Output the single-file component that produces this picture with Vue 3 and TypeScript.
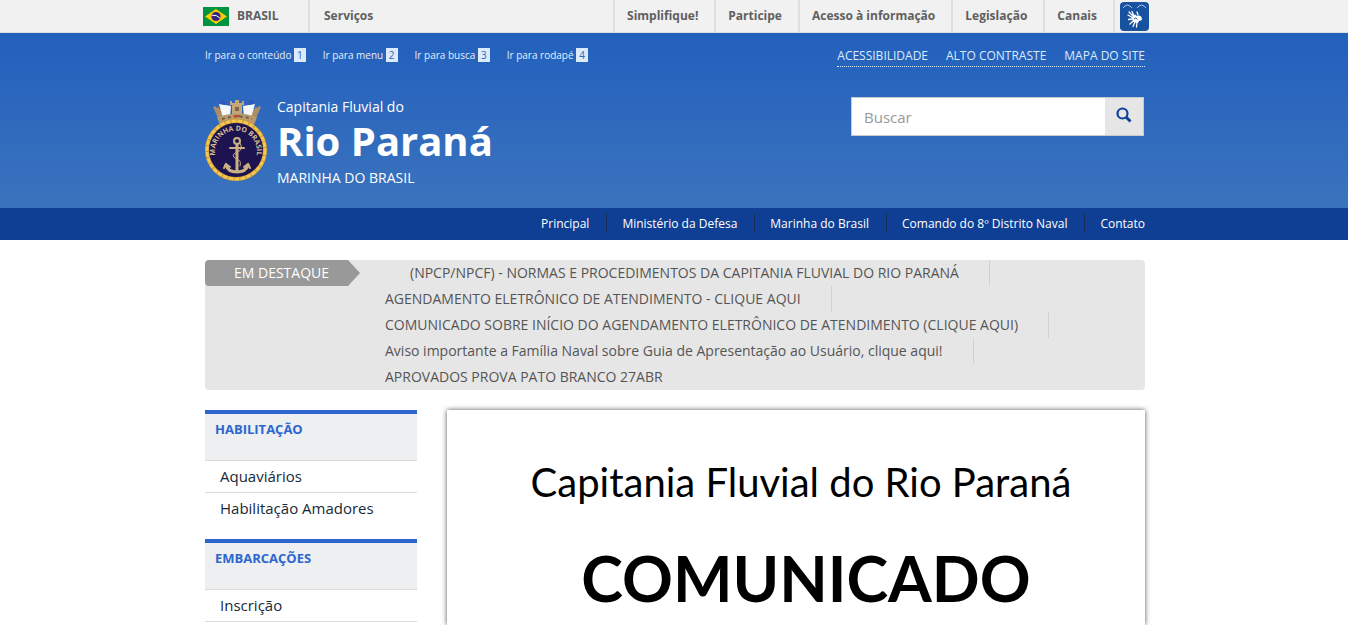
<script setup lang="ts">
import { ref } from 'vue'

interface MenuGroup {
  title: string
  items: string[]
}

const barLinks: string[] = ['Simplifique!', 'Participe', 'Acesso à informação', 'Legislação', 'Canais']
const skipLinks: string[] = ['Ir para o conteúdo', 'Ir para menu', 'Ir para busca', 'Ir para rodapé']
const tools: string[] = ['ACESSIBILIDADE', 'ALTO CONTRASTE', 'MAPA DO SITE']
const sections: string[] = ['Principal', 'Ministério da Defesa', 'Marinha do Brasil', 'Comando do 8º Distrito Naval', 'Contato']
const highlights: string[] = [
  '(NPCP/NPCF) - NORMAS E PROCEDIMENTOS DA CAPITANIA FLUVIAL DO RIO PARANÁ',
  'AGENDAMENTO ELETRÔNICO DE ATENDIMENTO - CLIQUE AQUI',
  'COMUNICADO SOBRE INÍCIO DO AGENDAMENTO ELETRÔNICO DE ATENDIMENTO (CLIQUE AQUI)',
  'Aviso importante a Família Naval sobre Guia de Apresentação ao Usuário, clique aqui!',
  'APROVADOS PROVA PATO BRANCO 27ABR',
]
const groups: MenuGroup[] = [
  { title: 'HABILITAÇÃO', items: ['Aquaviários', 'Habilitação Amadores'] },
  { title: 'EMBARCAÇÕES', items: ['Inscrição'] },
]
const query = ref('')
</script>

<template>
  <div class="page">
    <div class="gov-bar">
      <div class="wrap gov-inner">
        <a href="#" class="brasil">
          <svg class="flag" viewBox="0 0 26 19" aria-hidden="true">
            <rect width="26" height="19" fill="#009440" />
            <path d="M13 2 L24 9.500 L13 17 L2 9.500 Z" fill="#ffcb00" />
            <circle cx="13" cy="9.500" r="4.600" fill="#302681" />
            <path d="M8.800 8.200 Q13.500 7.500 17.200 11.200" stroke="#fff" stroke-width="1" fill="none" />
          </svg>
          <span>BRASIL</span>
        </a>
        <a href="#" class="services">Serviços</a>
        <nav class="gov-links">
          <a v-for="l in barLinks" :key="l" href="#">{{ l }}</a>
        </nav>
        <button class="libras" type="button" aria-label="Libras">
          <svg viewBox="0 0 29 29" aria-hidden="true">
            <path d="M3 6 L5 4 Q7 2 10 4 L12 6 M17 6 L19 4 Q22 2 24 4 L26 6" stroke="#a9c4e8" stroke-width="1" fill="none" />
            <path d="M13 16 L8 13 M13 14 L9 10 M14 14 L12 9.500 M12 17 L8.500 17.500 M13 19 L10 22 M15 20 L13 24.500 M17 20 L16.500 25 M18 13 L17 10" stroke="#fff" stroke-width="1.300" stroke-linecap="round" fill="none" />
            <path d="M12 15 L15 12.500 L17 14 Q20 12.500 21.500 15 L22 18 L19 19 L18 21 L13 20 Z" fill="#fff" />
            <path d="M14 17 Q16 14.500 17.500 17.500" stroke="#16529f" stroke-width="1" fill="none" />
          </svg>
        </button>
      </div>
    </div>

    <header class="header">
      <div class="wrap">
        <div class="header-top">
          <ul class="skips">
            <li v-for="(s, i) in skipLinks" :key="s">
              <a href="#">{{ s }} <span>{{ i + 1 }}</span></a>
            </li>
          </ul>
          <nav class="tools">
            <a v-for="t in tools" :key="t" href="#">{{ t }}</a>
          </nav>
        </div>
        <div class="header-main">
          <a href="#" class="brand">
            <svg class="crest" viewBox="0 0 64 84" aria-hidden="true">
              <path d="M13 20 L8 9 L11 8 L11 10 L14 9 L14 11 L17 11 L17 22 M51 20 L56 9 L53 8 L53 10 L50 9 L50 11 L47 11 L47 22" fill="#ad8d65" />
              <path d="M27 20 V7 H25 V3 H27 V5 H30 V2 H34 V5 H37 V3 H39 V7 H37 V20 Z" fill="#c5a679" />
              <path d="M30 13 V9 H34 V13 Z" fill="#7d6546" />
              <path d="M14 6 L26 8 L25 19 L18 20 Z M50 6 L38 8 L39 19 L46 20 Z" fill="#f5f7fa" />
              <path d="M15 2 L20 3 L20 7 L16 6 Z M44 3 L49 2 L48 6 L44 7 Z" fill="#3554c4" />
              <path d="M12 19 Q32 12 52 19 L49 27 Q32 19 15 27 Z" fill="#b99a6d" />
              <path d="M17 21 Q32 16 47 21" stroke="#765d43" stroke-width="2" fill="none" stroke-dasharray="3 3" />
              <path d="M29 18 H35" stroke="#bd4b37" stroke-width="2" />
              <circle cx="31" cy="52" r="29" fill="#1d1351" stroke="#c9952e" stroke-width="4" />
              <circle cx="31" cy="52" r="29" fill="none" stroke="#f2c650" stroke-width="3" stroke-dasharray="5 1" />
              <path id="crest-arc" d="M11 60 A21 21 0 1 1 51 60" fill="none" />
              <text class="crest-text"><textPath href="#crest-arc" startOffset="50%" text-anchor="middle">MARINHA DO BRASIL</textPath></text>
              <g stroke="#cbb184" fill="none" stroke-linecap="round">
                <circle cx="32" cy="43" r="3" stroke-width="2" />
                <path d="M32 47 V73" stroke-width="3" />
                <path d="M25 50 H39" stroke-width="2" />
                <path d="M21 67 Q23 74 32 74 Q41 74 43 67" stroke-width="3" />
                <path d="M19 70 L21 66 L25 69 M39 69 L43 66 L45 70" stroke-width="2" />
                <path d="M35 45 Q39 52 32 54 Q25 57 31 61 Q37 62 35 68" stroke-width="1" />
              </g>
            </svg>
            <span class="brand-text">
              <span class="small">Capitania Fluvial do</span>
              <strong>Rio Paraná</strong>
              <span class="small">MARINHA DO BRASIL</span>
            </span>
          </a>
          <form class="search" role="search" @submit.prevent>
            <input v-model="query" type="text" placeholder="Buscar" aria-label="Buscar" />
            <button type="submit" aria-label="Pesquisar">
              <svg viewBox="0 0 16 16" aria-hidden="true">
                <circle cx="6.500" cy="6.500" r="5" fill="none" stroke="#0f3f97" stroke-width="2.200" />
                <path d="M10 10 L14.500 14.500" stroke="#0f3f97" stroke-width="3" />
              </svg>
            </button>
          </form>
        </div>
      </div>
    </header>

    <div class="section-bar">
      <nav class="wrap sections">
        <a v-for="s in sections" :key="s" href="#">{{ s }}</a>
      </nav>
    </div>

    <div class="wrap body">
      <section class="highlights">
        <h2>EM DESTAQUE</h2>
        <ul>
          <li v-for="h in highlights" :key="h"><a href="#">{{ h }}</a></li>
        </ul>
      </section>
      <div class="columns">
        <aside>
          <nav v-for="g in groups" :key="g.title" class="group">
            <h2>{{ g.title }}</h2>
            <ul>
              <li v-for="i in g.items" :key="i"><a href="#">{{ i }}</a></li>
            </ul>
          </nav>
        </aside>
        <main class="notice">
          <p>Capitania Fluvial do Rio Paraná</p>
          <h1>COMUNICADO</h1>
        </main>
      </div>
    </div>
  </div>
</template>

<style>
body {
  margin: 0;
  background: #fff;
}
</style>

<style scoped>
.page {
  display: flex;
  flex-direction: column;
  min-height: 100vh;
  font-family: "Open Sans", "Noto Sans", sans-serif;
  font-size: 14px;
}
.page * {
  box-sizing: border-box;
}
a {
  color: inherit;
  text-decoration: none;
}
ul, h1, h2, p {
  margin: 0;
  padding: 0;
  list-style: none;
}
.wrap {
  width: 100%;
  max-width: 942px;
  margin: 0 auto;
  padding-left: 2px;
}
.gov-bar {
  background: #f1f1f1;
  border-bottom: 1px solid #dfdfdf;
  color: #606060;
  font-size: 12px;
  font-weight: 700;
  line-height: 32px;
}
.gov-inner {
  display: flex;
  max-width: 950px;
  padding-left: 4px;
  height: 32px;
}
.brasil {
  display: flex;
  align-items: center;
  gap: 8px;
  width: 105px;
}
.flag {
  width: 26px;
  height: 19px;
}
.services {
  padding-left: 14px;
  border-left: 2px solid #dfdfdf;
}
.gov-links {
  display: flex;
  margin-left: auto;
  border-right: 2px solid #dfdfdf;
}
.gov-links a {
  padding: 0 16px 0 12px;
  border-left: 2px solid #dfdfdf;
}
.libras {
  width: 29px;
  height: 29px;
  margin: 2px 0 0 5px;
  padding: 0;
  border: 0;
  border-radius: 4px;
  background: #16529f;
}
.libras svg {
  display: block;
}
.header {
  height: 175px;
  background: linear-gradient(#2260bd, #3b73bd);
  color: #fff;
}
.header-top {
  display: flex;
  justify-content: space-between;
  align-items: flex-start;
  padding-top: 13px;
}
.skips {
  display: flex;
  gap: 17px;
  font-size: 10px;
  line-height: 14px;
  padding-top: 2px;
  color: #e3effd;
}
.skips span {
  display: inline-block;
  padding: 0 3px;
  background: #dceafb;
  color: #3065ba;
}
.tools {
  display: flex;
  gap: 18px;
  border-bottom: 1px dotted #dceafb;
  color: #dceafb;
  font-size: 12px;
  line-height: 20px;
}
.header-main {
  display: flex;
  justify-content: space-between;
  align-items: flex-start;
  padding-top: 30px;
}
.brand {
  display: flex;
  gap: 8px;
}
.crest {
  width: 64px;
  height: 84px;
  margin-top: 1px;
}
.crest-text {
  font-size: 7px;
  font-weight: 700;
  fill: #d4bd92;
}
.brand-text {
  display: flex;
  flex-direction: column;
}
.small {
  font-size: 14px;
  line-height: 20px;
}
.brand strong {
  font-size: 40px;
  line-height: 48px;
  padding-bottom: 3px;
}
.search {
  display: flex;
  width: 293px;
  height: 39px;
  border: 1px solid #c5c9d0;
  margin-right: 1px;
}
.search input {
  flex: 1;
  min-width: 0;
  padding: 0 12px;
  border: 0;
  outline: 0;
  background: #fff;
  color: #444;
  font-family: inherit;
  font-size: 15px;
}
.search input::placeholder {
  color: #999;
}
.search button {
  width: 38px;
  padding: 0;
  border: 0;
  background: #e6e6e6;
}
.search svg {
  width: 16px;
  height: 16px;
}
.section-bar {
  background: #0f3f95;
  color: #fff;
  font-size: 12px;
}
.sections {
  display: flex;
  justify-content: flex-end;
  align-items: center;
  height: 32px;
  padding-bottom: 1px;
}
.sections a {
  padding: 0 17px 0 15px;
  border-right: 1px solid #172d55;
  line-height: 19px;
}
.sections a:last-child {
  padding-right: 0;
  border: 0;
}
.body {
  display: flex;
  flex: 1;
  flex-direction: column;
  padding-top: 20px;
}
.highlights {
  display: flex;
  align-items: flex-start;
  border-radius: 4px;
  background: #e6e6e6;
  color: #555;
  line-height: 26px;
}
.highlights h2 {
  width: 155px;
  padding-left: 29px;
  border-radius: 4px 0 0 4px;
  background: #999;
  clip-path: polygon(0 0, 143px 0, 100% 50%, 143px 100%, 0 100%);
  color: #fff;
  font-size: 14px;
  font-weight: 400;
}
.highlights ul {
  display: flex;
  flex-direction: column;
  align-items: flex-start;
  padding-left: 25px;
}
.highlights li {
  padding-right: 30px;
  border-right: 1px solid #d2d2d2;
}
.highlights li:first-child {
  padding-left: 25px;
}
.highlights li:last-child {
  border: 0;
}
.columns {
  display: flex;
  flex: 1;
  gap: 30px;
  padding-top: 20px;
}
aside {
  width: 212px;
}
.group {
  margin-bottom: 15px;
}
.group:last-child {
  margin-bottom: 0;
}
.group h2 {
  height: 51px;
  padding: 6px 10px;
  border-top: 4px solid #2c66ce;
  border-bottom: 1px solid #dcdcdc;
  background: #edeff1;
  color: #2c66ce;
  font-size: 13px;
  line-height: 19px;
}
.group li {
  padding-left: 15px;
  border-bottom: 1px solid #dcdcdc;
  color: #172938;
  font-size: 15px;
  line-height: 31px;
}
.group li:last-child:not(:first-child) {
  border: 0;
}
.notice {
  flex: 1;
  padding: 47px 0 0 10px;
  background: #fff;
  box-shadow: 0 0 5px #555;
  color: #000;
  font-family: Lato, "Open Sans", sans-serif;
  text-align: center;
}
.notice p {
  font-size: 40px;
  line-height: 50px;
}
.notice h1 {
  margin-top: 31px;
  padding-left: 10px;
  font-size: 63px;
  line-height: 80px;
}
</style>
